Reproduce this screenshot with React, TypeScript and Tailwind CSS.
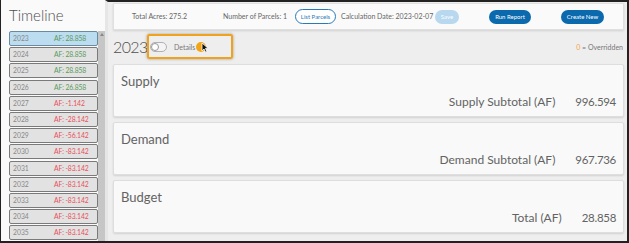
const years = [
  { y: 2023, af: '28.858' },
  { y: 2024, af: '28.858' },
  { y: 2025, af: '28.858' },
  { y: 2026, af: '26.858' },
  { y: 2027, af: '-1.142' },
  { y: 2028, af: '-28.142' },
  { y: 2029, af: '-56.142' },
  { y: 2030, af: '-83.142' },
  { y: 2031, af: '-83.142' },
  { y: 2032, af: '-83.142' },
  { y: 2033, af: '-83.142' },
  { y: 2034, af: '-83.142' },
  { y: 2035, af: '-83.142' },
];

function Card({ title, label, value }: { title: string; label: string; value: string }) {
  return (
    <div className="h-[53px] bg-[#f9f9f9] border border-[#dedede] rounded-[2px] shadow-[0_1px_2px_rgba(0,0,0,0.12)] flex flex-col px-[7px]">
      <div className="text-[13px] text-[#636363] leading-none mt-[10px]">{title}</div>
      <div className="flex justify-end items-center mt-auto mb-[8px] text-[#636363] leading-none whitespace-nowrap">
        <span className="text-[12px]">{label}</span>
        <span className="ml-[20px] text-[11.5px] tracking-[-0.3px]">{value}</span>
      </div>
    </div>
  );
}

export default function App() {
  return (
    <div className="w-[629px] h-[243px] flex bg-[#eeeeee] border-l-[1px] border-r-[2px] border-b-[2px] border-[#222] overflow-hidden font-['Lato',sans-serif]">
      {/* Sidebar */}
      <div className="w-[104px] shrink-0 bg-[#fafafa] flex flex-col">
        <div className="h-[31px] pl-[8px] pt-[8px] text-[15px] font-light leading-none text-[#4f4f4f]">Timeline</div>
        <div className="flex flex-1 min-h-0">
          <div className="w-[97px] pl-[8px] flex flex-col gap-[1.2px]">
            {years.map((r, i) => {
              const pos = !r.af.startsWith('-');
              return (
                <div
                  key={r.y}
                  className={`h-[15px] shrink-0 flex items-center rounded-[2px] border text-[6.8px] leading-none whitespace-nowrap ${
                    i === 0 ? 'bg-[#bcdcef] border-[#6a8aa0]' : 'bg-[#e2e2e2] border-[#7a7a7a]'
                  }`}
                >
                  <span className="w-[44px] shrink-0 pl-[3px] text-[#888]">{r.y}</span>
                  <span className={`shrink-0 tracking-[-0.1px] ${pos ? 'text-[#5a9a5a]' : 'text-[#e8505a]'}`}>AF: {r.af}</span>
                </div>
              );
            })}
          </div>
          <div className="w-[7px] bg-[#c6c6c6] flex flex-col items-center">
            <div className="w-0 h-0 mt-[2px] border-l-[2px] border-r-[2px] border-b-[3px] border-l-transparent border-r-transparent border-b-[#888]" />
          </div>
        </div>
      </div>

      {/* Main */}
      <div className="flex-1 flex flex-col border-l-[3px] border-[#e6e6e6] border-t-[2px] border-t-[#222] pl-[5px] pr-[3px] pt-[1px]">
        <div className="h-[27px] bg-[#fafafa] border border-[#e0e0e0] shadow-[0_1px_2px_rgba(0,0,0,0.12)] flex items-center text-[7px] text-[#666] leading-none whitespace-nowrap">
          <span className="ml-[18px] w-[91px] shrink-0">Total Acres: 275.2</span>
          <span className="w-[72px] shrink-0">Number of Parcels: 1</span>
          <span className="h-[15px] w-[41px] shrink-0 flex items-center justify-center rounded-full border border-[#2a7ab8] text-[#2a7ab8] bg-white text-[6px]">
            List Parcels
          </span>
          <span className="ml-[5px] w-[94px] shrink-0">Calculation Date: 2023-02-07</span>
          <span className="h-[14px] w-[24px] shrink-0 flex items-center justify-center rounded-full bg-[#b7d8ee] text-white text-[6px]">
            Save
          </span>
          <span className="ml-[30px] h-[14px] w-[42px] shrink-0 flex items-center justify-center rounded-full bg-[#0b69ae] text-white text-[6px]">
            Run Report
          </span>
          <span className="ml-[30px] h-[14px] w-[43px] shrink-0 flex items-center justify-center rounded-full bg-[#0b69ae] text-white text-[6px]">
            Create New
          </span>
        </div>

        <div className="relative h-[34px] flex items-center whitespace-nowrap">
          <span className="w-[37px] shrink-0 text-[16px] font-light text-[#4f4f4f] leading-none tracking-[-0.6px]">2023</span>
          <span className="w-[17px] h-[10px] shrink-0 rounded-full border border-[#b0b0b0] bg-[#f4f4f4] flex items-center">
            <span className="w-[8px] h-[8px] rounded-full bg-white border border-[#999]" />
          </span>
          <span className="ml-[7px] w-[22px] shrink-0 text-[7px] text-[#777] leading-none">Details</span>
          <span className="w-[10px] h-[10px] shrink-0 rounded-full bg-[#f1a514]" />
          <span className="ml-auto mr-[1px] text-[7px] text-[#777] leading-none">
            <span className="text-[#f2a24a]">0</span> = Overridden
          </span>
          {/* highlight annotation */}
          <div className="absolute left-[34px] top-[4px] w-[86px] h-[25px] border-[2px] border-[#f0a21c] rounded-[2px] shadow-[0_0_3px_rgba(0,0,0,0.35)]" />
          <svg className="absolute left-[88px] top-[12px]" width="9" height="11" viewBox="0 0 9 11">
            <path d="M1 1 L1 9 L3 7 L4.6 10.2 L6 9.5 L4.4 6.4 L7 6.2 Z" fill="#111" stroke="#fff" strokeWidth="0.8" />
          </svg>
        </div>

        <div className="flex flex-col gap-[5px]">
          <Card title="Supply" label="Supply Subtotal (AF)" value="996.594" />
          <Card title="Demand" label="Demand Subtotal (AF)" value="967.736" />
          <Card title="Budget" label="Total (AF)" value="28.858" />
        </div>
      </div>
    </div>
  );
}
